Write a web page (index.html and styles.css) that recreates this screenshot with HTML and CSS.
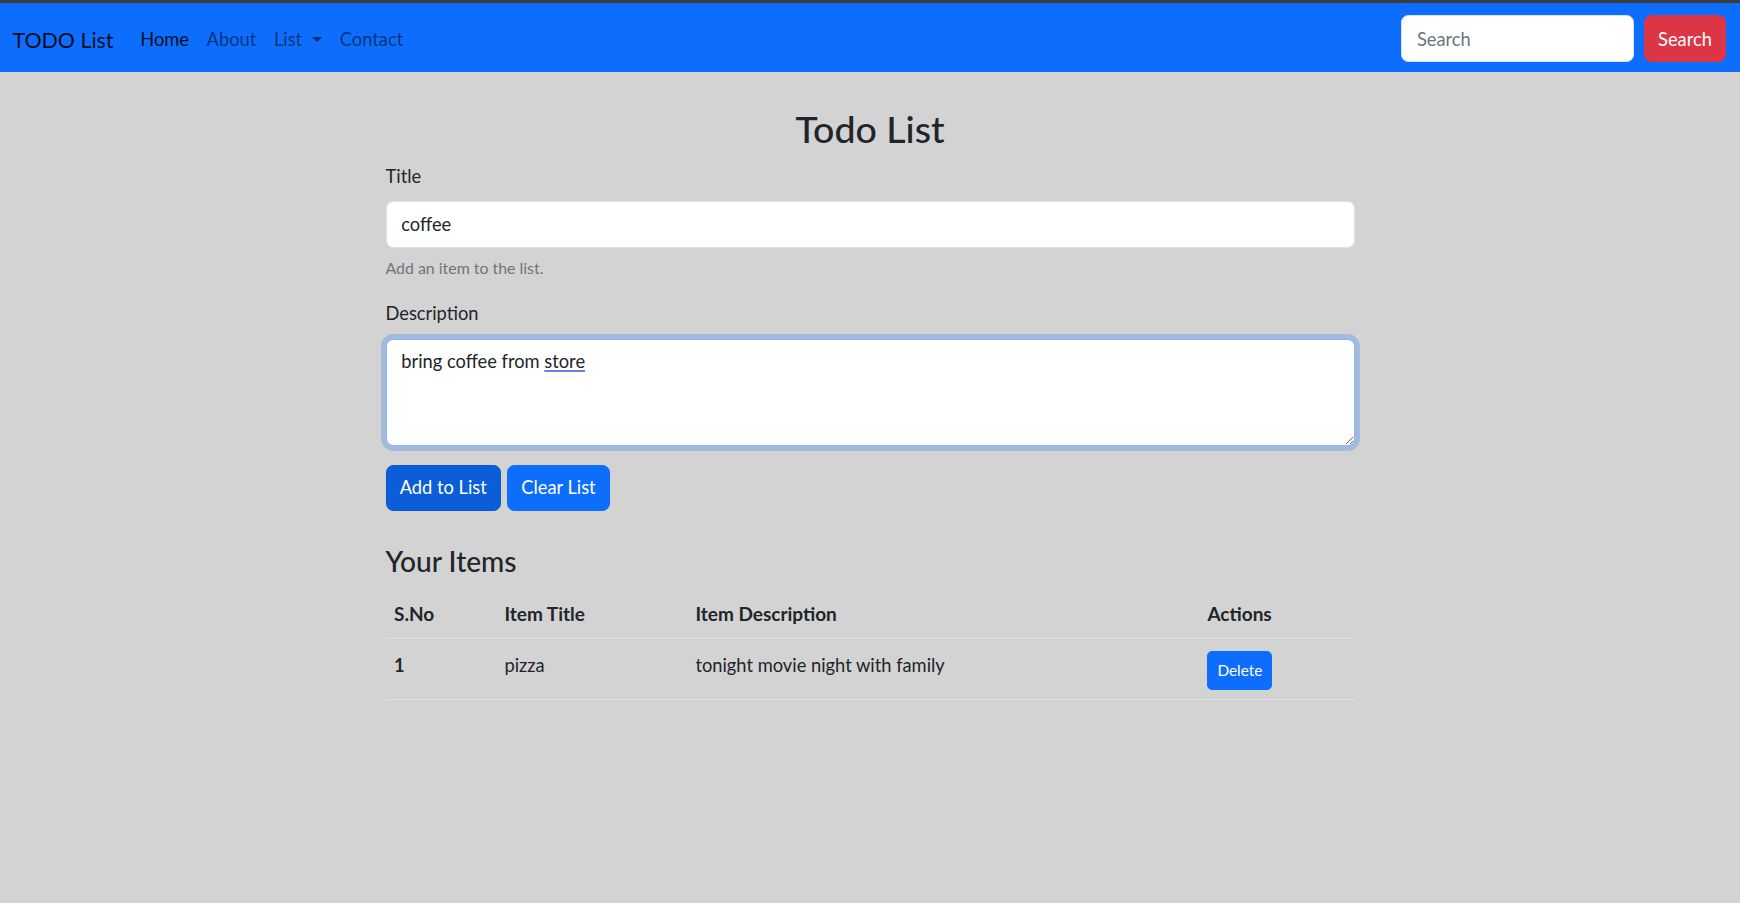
FILE: index.html
```html
<!DOCTYPE html>
<html lang="en">
<head>
<meta charset="utf-8">
<title>TODO List</title>
<link rel="stylesheet" href="styles.css">
</head>
<body>
<nav class="navbar">
  <div class="nav-left">
    <a class="brand" href="#">TODO List</a>
    <ul class="nav-links">
      <li><a class="nav-link active" href="#">Home</a></li>
      <li><a class="nav-link" href="#">About</a></li>
      <li><a class="nav-link dropdown-toggle" href="#">List</a></li>
      <li><a class="nav-link" href="#">Contact</a></li>
    </ul>
  </div>
  <form class="search-form">
    <input class="search-input" type="search" placeholder="Search">
    <button class="btn btn-danger" type="button">Search</button>
  </form>
</nav>

<main class="container">
  <h2 class="page-title">Todo List</h2>
  <div class="field">
    <label class="form-label" for="title">Title</label>
    <input class="form-control" id="title" type="text" value="coffee">
    <div class="form-text">Add an item to the list.</div>
  </div>
  <div class="field">
    <label class="form-label">Description</label>
    <div class="form-control textarea focused">bring coffee from <span class="spell">store</span></div>
  </div>
  <div class="actions">
    <button class="btn btn-primary pressed" type="button">Add to List</button>
    <button class="btn btn-primary" type="button">Clear List</button>
  </div>

  <section class="items">
    <h4 class="section-title">Your Items</h4>
    <table class="table">
      <thead>
        <tr>
          <th class="col-no">S.No</th>
          <th class="col-title">Item Title</th>
          <th class="col-desc">Item Description</th>
          <th class="col-act">Actions</th>
        </tr>
      </thead>
      <tbody>
        <tr>
          <th>1</th>
          <td>pizza</td>
          <td>tonight movie night with family</td>
          <td class="cell-btn"><button class="btn btn-primary btn-sm" type="button">Delete</button></td>
        </tr>
      </tbody>
    </table>
  </section>
</main>
</body>
</html>
```

FILE: styles.css
```css
* { box-sizing: border-box; }

html { background: #d3d3d3; }

body {
  margin: 0;
  background: #d3d3d3;
  font-family: Lato, "Open Sans", sans-serif;
  font-size: 18.3px;
  line-height: 29.6px;
  color: #212529;
}

/* ---------- navbar ---------- */
.navbar {
  display: flex;
  align-items: center;
  justify-content: space-between;
  height: 72px;
  padding: 1px 14px 0 12.5px;
  background: #0d6efd;
  border-top: 3px solid #3c3c3c;
}

.nav-left {
  display: flex;
  align-items: center;
  padding-top: 3px;
}

.brand {
  font-size: 21.4px;
  line-height: 30px;
  padding: 6px 0;
  margin-right: 18px;
  color: rgba(0, 0, 0, 0.9);
  text-decoration: none;
}

.nav-links {
  display: flex;
  list-style: none;
  margin: 0;
  padding: 0;
}

.nav-link {
  display: block;
  padding: 5px 8.8px;
  color: rgba(0, 0, 0, 0.55);
  text-decoration: none;
}

.nav-link.active { color: rgba(0, 0, 0, 0.9); }

.dropdown-toggle::after {
  content: "";
  display: inline-block;
  margin-left: 0.55em;
  vertical-align: 0.2em;
  border-top: 0.3em solid;
  border-right: 0.3em solid transparent;
  border-left: 0.3em solid transparent;
}

.search-form {
  display: flex;
  align-items: center;
  gap: 9.9px;
}

.search-input {
  width: 233px;
  height: 47px;
  padding: 8.6px 14.8px 6.2px;
  font: inherit;
  color: #212529;
  background: #fff;
  border: 1px solid #dee2e6;
  border-radius: 7.4px;
  outline: none;
}

.search-input::placeholder { color: #6c757d; }

/* ---------- buttons ---------- */
.btn {
  display: inline-block;
  height: 46.4px;
  padding: 7.4px 13.2px;
  font: inherit;
  line-height: 29.6px;
  color: #fff;
  border: 1px solid transparent;
  border-radius: 7.4px;
  cursor: pointer;
}

.btn-danger {
  width: 82px;
  height: 47px;
  padding: 9px 0 5.8px;
  background: #dc3545;
  border-color: #dc3545;
}

.btn-primary {
  background: #0d6efd;
  border-color: #0d6efd;
}

.btn-primary.pressed {
  background: #0b5ed7;
  border-color: #0a58ca;
}

.btn-sm {
  height: 39px;
  padding: 4.94px 9px;
  font-size: 15.4px;
  line-height: 27px;
  border-radius: 4.94px;
}

/* ---------- main ---------- */
.container {
  width: 969px;
  margin: 32.5px auto 0;
}

.page-title {
  margin: 0 0 9.9px;
  font-size: 37.5px;
  line-height: 47.4px;
  font-weight: 500;
  text-align: center;
}

.field { margin-bottom: 18.8px; }

.form-label {
  display: inline-block;
  margin-bottom: 9.9px;
}

.form-control {
  display: block;
  width: 100%;
  height: 46.4px;
  padding: 7.4px 14.8px;
  font: inherit;
  color: #212529;
  background: #fff;
  border: 1px solid #dee2e6;
  border-radius: 7.4px;
  outline: none;
}

.textarea {
  height: 107px;
  overflow: auto;
  resize: vertical;
}

.textarea.focused {
  border-color: #86b7fe;
  box-shadow: 0 0 0 4.94px rgba(13, 110, 253, 0.25);
}

.spell {
  text-decoration: underline;
  text-decoration-color: #6a7fe0;
  text-decoration-thickness: 1.5px;
  text-underline-offset: 2px;
}

.form-text {
  margin-top: 6.9px;
  font-size: 15.9px;
  line-height: 25.9px;
  color: #6c757d;
}

.actions {
  display: flex;
  gap: 6px;
  margin-top: 2px;
}

.items { margin-top: 32.6px; }

.section-title {
  margin: 0 0 9.9px;
  font-size: 28.1px;
  line-height: 35.5px;
  font-weight: 500;
}

/* ---------- table ---------- */
.table {
  width: 100%;
  border-collapse: collapse;
  text-align: left;
}

.table th,
.table td {
  padding: 9.9px;
  vertical-align: top;
  border-bottom: 1px solid #dee2e6;
}

.table th:first-child { padding-left: 8.5px; }

.table thead th { font-size: 19px; }

.table th { font-weight: 700; }

.table td { font-weight: 400; }

.table tbody th,
.table tbody td {
  padding-top: 12.2px;
  padding-bottom: 8.6px;
}

.table tbody td.cell-btn {
  padding-top: 11.4px;
  padding-bottom: 9.4px;
}

.col-no { width: 109px; }
.col-title { width: 191px; }
.col-desc { width: 512px; }
.col-act { width: 157px; }
```
